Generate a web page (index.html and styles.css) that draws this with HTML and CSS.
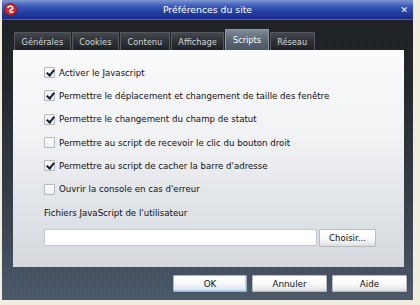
FILE: index.html
```html
<!DOCTYPE html>
<html lang="fr">
<head>
<meta charset="utf-8">
<title>Préférences du site</title>
<link rel="stylesheet" href="styles.css">
</head>
<body>
<div class="window">
  <div class="titlebar">
    <svg class="logo" width="13" height="13" viewBox="0 0 13 13">
      <circle cx="6.5" cy="6.5" r="6" fill="#d42a2a"/>
      <circle cx="6.5" cy="6.5" r="6" fill="none" stroke="#8a1010" stroke-width="0.8"/>
      <path d="M4 4.2 C5.5 2.6 8.6 3 8.8 5 C9 6.6 6.2 6.4 5.8 7.8 C5.5 9 7 9.8 8.8 8.9" fill="none" stroke="#fff" stroke-width="1.6" stroke-linecap="round"/>
    </svg>
    <span class="title">Préférences du site</span>
    <span class="close">✕</span>
  </div>
  <div class="body">
    <div class="tabs">
      <div class="tab">Générales</div>
      <div class="tab">Cookies</div>
      <div class="tab">Contenu</div>
      <div class="tab">Affichage</div>
      <div class="tab active">Scripts</div>
      <div class="tab">Réseau</div>
    </div>
    <div class="panel">
      <label class="row"><span class="cb checked"></span>Activer le Javascript</label>
      <label class="row"><span class="cb checked"></span>Permettre le déplacement et changement de taille des fenêtre</label>
      <label class="row"><span class="cb checked"></span>Permettre le changement du champ de statut</label>
      <label class="row"><span class="cb"></span>Permettre au script de recevoir le clic du bouton droit</label>
      <label class="row"><span class="cb checked"></span>Permettre au script de cacher la barre d'adresse</label>
      <label class="row"><span class="cb"></span>Ouvrir la console en cas d'erreur</label>
      <div class="fieldlabel">Fichiers JavaScript de l'utilisateur</div>
      <div class="filerow">
        <div class="input"></div>
        <div class="btn small">Choisir...</div>
      </div>
    </div>
    <div class="actions">
      <div class="btn big ok">OK</div>
      <div class="btn big">Annuler</div>
      <div class="btn big">Aide</div>
    </div>
  </div>
</div>
</body>
</html>
```

FILE: styles.css
```css
html, body {
  margin: 0;
  padding: 0;
}
body {
  width: 420px;
  height: 305px;
  background: #f2eedf;
  font-family: "DejaVu Sans", sans-serif;
  overflow: hidden;
}
.window {
  margin-left: 2px;
  width: 411px;
  height: 300px;
  display: flex;
  flex-direction: column;
  background: linear-gradient(to bottom, #1b1e20 0%, #22272b 30%, #333c46 65%, #4b5869 100%);
}
.titlebar {
  height: 19px;
  flex: none;
  display: flex;
  align-items: center;
  position: relative;
  background: linear-gradient(to bottom, #7f97d2 0%, #3f5ebb 30%, #2541a6 60%, #1a2c88 100%);
  border-bottom: 1px solid #5d6068;
}
.logo {
  margin-left: 2px;
}
.title {
  position: absolute;
  left: 0;
  right: 0;
  text-align: center;
  color: #ffffff;
  font-size: 9.3px;
  line-height: 19px;
}
.close {
  margin-left: auto;
  margin-right: 5px;
  color: #ffffff;
  font-size: 9px;
  font-weight: bold;
}
.body {
  flex: 1;
  display: flex;
  flex-direction: column;
  padding: 0 9px 0 11px;
  background-image: repeating-linear-gradient(to right, rgba(255,255,255,0.025) 0 1px, rgba(0,0,0,0.03) 1px 2px);
}
.tabs {
  display: flex;
  align-items: flex-end;
  height: 21px;
  margin-top: 9px;
  padding-left: 1px;
  gap: 1px;
}
.tab {
  height: 18px;
  padding: 0 6.6px;
  box-sizing: border-box;
  display: flex;
  align-items: center;
  font-size: 8.2px;
  color: #d4d6d8;
  background: linear-gradient(to bottom, #44484c 0%, #2e3236 50%, #1e2124 100%);
  border: 1px solid #55595e;
  border-bottom: none;
}
.tab.active {
  height: 21px;
  color: #ffffff;
  background: linear-gradient(to bottom, #7e8a98 0%, #5c6876 50%, #4b5664 100%);
  border-color: #8a96a4;
}
.panel {
  height: 217px;
  box-sizing: border-box;
  padding: 11px 0 0 31px;
  background: linear-gradient(to bottom, #fbfbfc 0%, #f1f2f4 40%, #dfe2e6 75%, #d5d9de 100%);
  display: flex;
  flex-direction: column;
}
.row {
  height: 23.3px;
  display: flex;
  align-items: center;
  font-size: 8.65px;
  color: #101010;
}
.cb {
  width: 11px;
  height: 11px;
  box-sizing: border-box;
  border: 1px solid #b4b8bd;
  border-radius: 1px;
  background: linear-gradient(to bottom, #ffffff, #eceef0);
  margin-right: 4px;
  position: relative;
  flex: none;
}
.cb.checked::after {
  content: "";
  position: absolute;
  left: 3px;
  top: 0px;
  width: 3px;
  height: 6px;
  border-right: 2px solid #141c33;
  border-bottom: 2px solid #141c33;
  transform: rotate(40deg);
}
.fieldlabel {
  margin-top: 6px;
  height: 12px;
  line-height: 12px;
  font-size: 8.65px;
  color: #101010;
}
.filerow {
  display: flex;
  margin-top: 10px;
  gap: 2px;
  align-items: flex-start;
}
.input {
  width: 273px;
  height: 17px;
  box-sizing: border-box;
  background: #ffffff;
  border: 1px solid #c4c8cc;
  border-radius: 1px;
}
.btn {
  box-sizing: border-box;
  display: flex;
  align-items: center;
  justify-content: center;
  font-size: 8.6px;
  color: #101010;
  background: linear-gradient(to bottom, #ffffff 0%, #fbfbfb 50%, #e8eaec 85%, #d8dadd 100%);
  border: 1px solid #b8bcc0;
  border-radius: 1px;
}
.btn.small {
  width: 57px;
  height: 18px;
}
.actions {
  display: flex;
  justify-content: flex-end;
  gap: 5px;
  margin-top: 8px;
  margin-right: -3px;
}
.btn.big {
  width: 75px;
  height: 17px;
  font-size: 8.8px;
}
.btn.ok {
  width: 74px;
  background: linear-gradient(to bottom, #ffffff 0%, #f6f8fb 50%, #dfe8f4 85%, #cddcee 100%);
  border-color: #9fb4d0;
  box-shadow: inset -1px -1px 0 #bcd0ea;
}
```
